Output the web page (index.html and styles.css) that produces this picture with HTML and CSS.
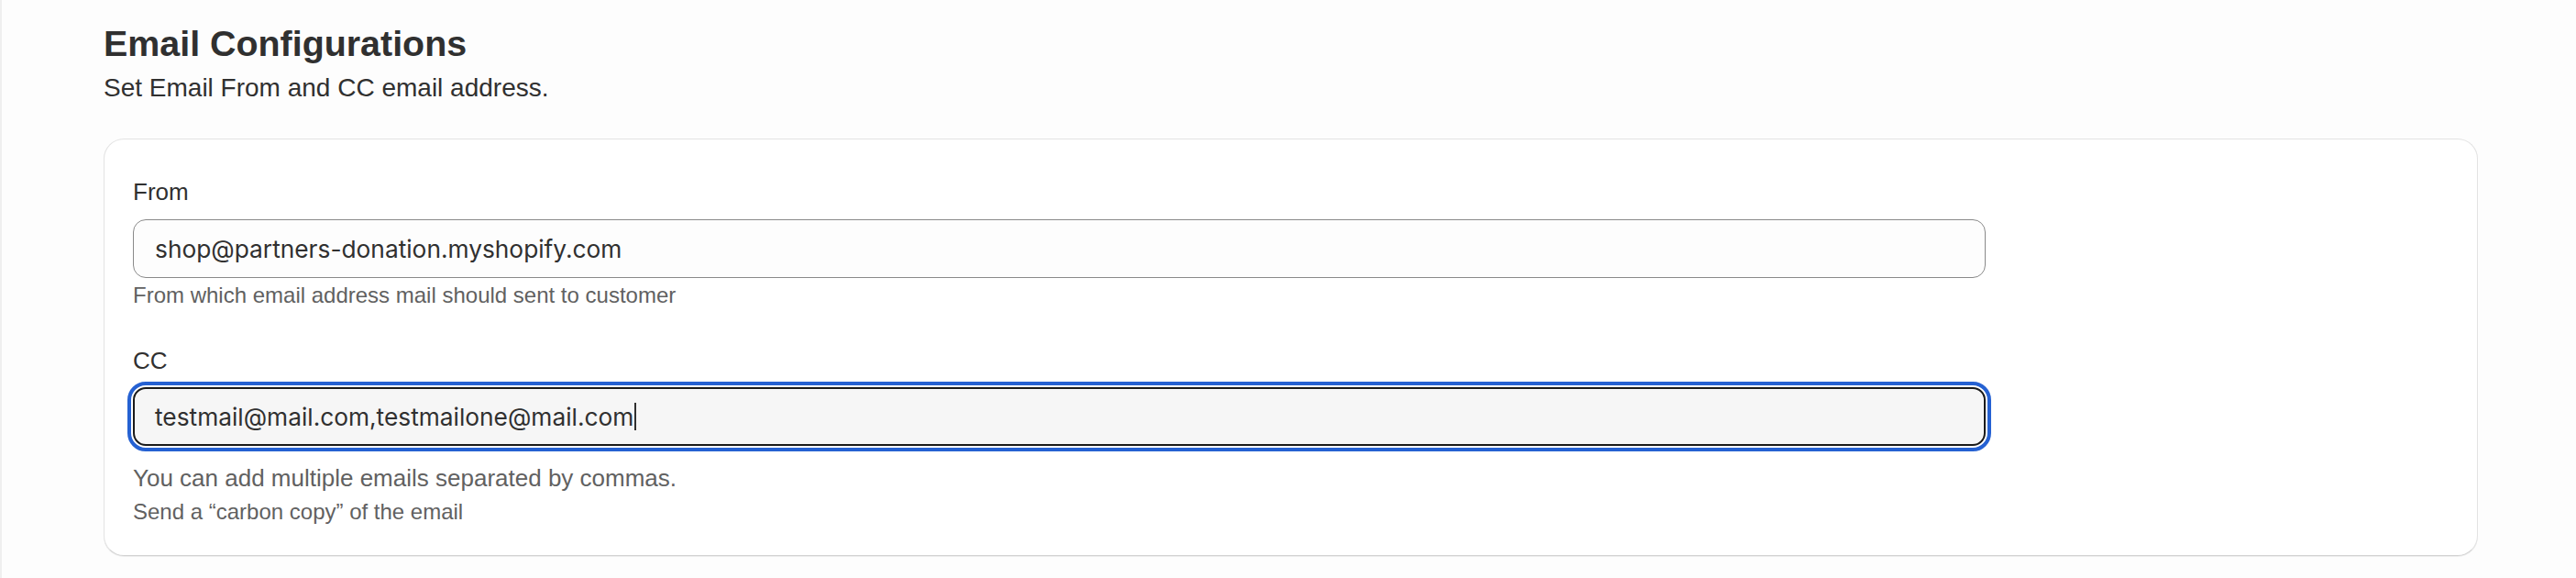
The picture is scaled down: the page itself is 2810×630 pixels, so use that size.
FILE: index.html
```html
<!DOCTYPE html>
<html lang="en">
<head>
<meta charset="utf-8">
<title>Email Configurations</title>
<link rel="stylesheet" href="styles.css">
</head>
<body>
<main class="page">
  <header class="section-head">
    <h1 class="section-title">Email Configurations</h1>
    <p class="section-desc">Set Email From and CC email address.</p>
  </header>
  <section class="card">
    <div class="field field-from">
      <label class="field-label">From</label>
      <div class="field-input" role="textbox">shop@partners-donation.myshopify.com</div>
      <p class="field-help">From which email address mail should sent to customer</p>
    </div>
    <div class="field field-cc">
      <label class="field-label">CC</label>
      <div class="field-input is-focused" role="textbox"><span>testmail@mail.com,testmailone@mail.com</span><span class="caret"></span></div>
      <p class="field-note">You can add multiple emails separated by commas.</p>
      <p class="field-help field-help-cc">Send a “carbon copy” of the email</p>
    </div>
  </section>
</main>
</body>
</html>
```

FILE: styles.css
```css
* { box-sizing: border-box; }

html, body {
  margin: 0;
  padding: 0;
}

body {
  background: #fdfdfd;
  border-left: 2px solid #efefef;
  min-height: 630px;
  font-family: "Liberation Sans", Arial, sans-serif;
  color: #303030;
}

.page {
  padding: 24px 107px 0 111px;
}

.section-title {
  margin: 0;
  font-size: 39.4px;
  line-height: 46px;
  font-weight: 700;
  color: #303030;
}

.section-desc {
  margin: 9px 0 0;
  font-size: 28px;
  line-height: 34px;
  color: #303030;
}

.card {
  margin-top: 38px;
  background: #ffffff;
  border: 1px solid #e3e3e3;
  border-bottom-color: #d2d2d2;
  border-radius: 22px;
  box-shadow: 0 1px 0 #ececec;
  padding: 43px 31px 33px;
}

.field {
  display: flex;
  flex-direction: column;
  align-items: flex-start;
}

.field-cc {
  margin-top: 43px;
}

.field-label {
  font-size: 26px;
  line-height: 28px;
  color: #303030;
}

.field-input {
  margin-top: 16px;
  width: 80%;
  height: 64px;
  display: flex;
  align-items: center;
  padding: 0 23px;
  border: 1px solid #8a8a8a;
  border-radius: 14px;
  background: #fdfdfd;
  font-family: Inter, "Liberation Sans", sans-serif;
  font-size: 26.3px;
  color: #303030;
}

.field-cc .field-input {
  margin-top: 15px;
}

.field-input.is-focused {
  border: 2px solid #1a1a1a;
  padding: 0 22px;
  background: #f6f6f6;
  outline: 4px solid #2561d2;
  outline-offset: 2px;
}

.caret {
  display: inline-block;
  width: 2px;
  height: 30px;
  margin-left: 1px;
  background: #303030;
}

.field-help {
  margin: 5px 0 0;
  font-size: 24px;
  line-height: 28px;
  color: #616161;
}

.field-note {
  margin: 20px 0 0;
  font-size: 26px;
  line-height: 30px;
  color: #616161;
}

.field-help-cc {
  margin-top: 8px;
}
```
